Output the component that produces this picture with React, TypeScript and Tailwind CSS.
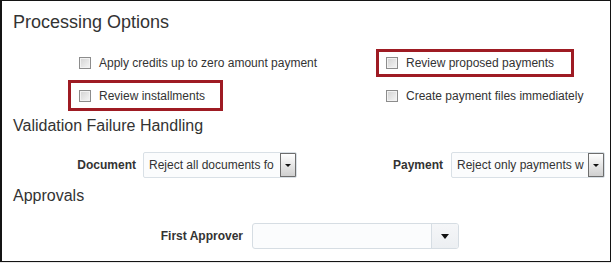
import React from "react";

const Checkbox = () => (
  <span className="inline-block w-[12px] h-[12px] shrink-0 border border-[#8c8c8c] bg-gradient-to-br from-[#d2d2d2] to-[#f6f6f6] shadow-[inset_0_0_0_1px_#f2f2f2]" />
);

const CheckItem = ({ label }: { label: string }) => (
  <div className="flex items-center gap-[8px] h-[16px] leading-[16px] text-[12px] text-[#333333]">
    <Checkbox />
    <span className="whitespace-nowrap">{label}</span>
  </div>
);

const SmallSelect = ({ value }: { value: string }) => (
  <div className="flex w-[154px] h-[26px] border border-[#d9e0e6] rounded-[2px] bg-[#fbfcfd] overflow-hidden">
    <div className="flex-1 min-w-0 overflow-hidden whitespace-nowrap pl-[5px] leading-[24px] text-[12px] text-[#333333]">
      {value}
    </div>
    <div className="w-[16px] h-full border border-[#6d6d6d] bg-gradient-to-b from-[#ffffff] to-[#cfcfcf] flex items-center justify-center">
      <span className="block w-0 h-0 border-l-[3px] border-r-[3px] border-t-[3px] border-l-transparent border-r-transparent border-t-[#111111]" />
    </div>
  </div>
);

export default function App() {
  return (
    <div className="w-[611px] h-[263px] bg-[#e9e9e9] font-['Liberation_Sans',Arial,sans-serif]">
      <div className="relative h-[262px] bg-white border-l-2 border-t border-r border-b border-[#141414] pl-[11px] pt-[11px]">
        <h1 className="text-[18px] leading-[20px] text-[#333333] font-normal">Processing Options</h1>

        <div className="mt-[23px] ml-[66px] grid grid-cols-[307px_auto] gap-y-[17px]">
          <CheckItem label="Apply credits up to zero amount payment" />
          <CheckItem label="Review proposed payments" />
          <CheckItem label="Review installments" />
          <CheckItem label="Create payment files immediately" />
        </div>

        <h2 className="mt-[13px] text-[16px] leading-[18px] text-[#333333] font-normal">Validation Failure Handling</h2>

        <div className="mt-[17px] flex items-center">
          <div className="w-[123px] text-right text-[12px] font-bold text-[#333333]">Document</div>
          <div className="ml-[7px]">
            <SmallSelect value="Reject all documents fo" />
          </div>
          <div className="w-[146px] text-right text-[12px] font-bold text-[#333333]">Payment</div>
          <div className="ml-[8px]">
            <SmallSelect value="Reject only payments w" />
          </div>
        </div>

        <h2 className="mt-[9px] text-[16px] leading-[18px] text-[#333333] font-normal">Approvals</h2>

        <div className="mt-[18px] flex items-center">
          <div className="w-[230px] text-right text-[12px] font-bold text-[#333333]">First Approver</div>
          <div className="ml-[9px] flex w-[207px] h-[26px] border border-[#d6dde3] rounded-[3px] bg-[#fbfcfd] overflow-hidden">
            <div className="flex-1" />
            <div className="w-[27px] h-full border-l border-[#d6dde3] bg-gradient-to-b from-[#f5f6f8] to-[#eceff2] flex items-center justify-center">
              <span className="block w-0 h-0 border-l-[4px] border-r-[4px] border-t-[5px] border-l-transparent border-r-transparent border-t-[#111111]" />
            </div>
          </div>
        </div>

        <div className="absolute left-[66px] top-[79px] w-[155px] h-[31px] border-[3px] border-[#9e1b23]" />
        <div className="absolute left-[374px] top-[48px] w-[198px] h-[28px] border-[3px] border-[#9e1b23]" />
      </div>
    </div>
  );
}
